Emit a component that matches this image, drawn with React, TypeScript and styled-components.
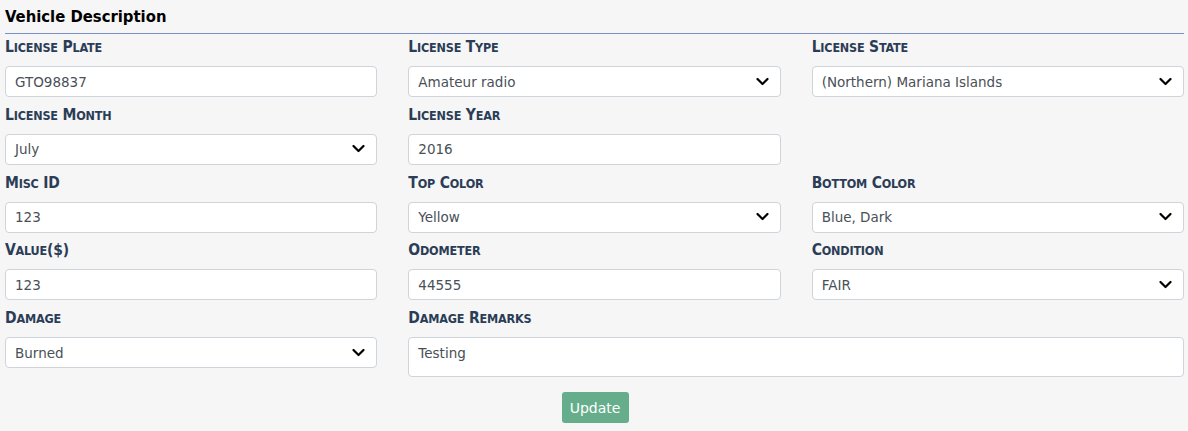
import React from "react";
import styled, { createGlobalStyle } from "styled-components";

const Global = createGlobalStyle`
  html, body { margin: 0; padding: 0; background: #f6f6f6; }
  body { font-family: "DejaVu Sans", Verdana, sans-serif; }
`;

const Page = styled.div`
  width: 1188px;
  height: 431px;
  box-sizing: border-box;
  padding: 6px 4px 0 5px;
  background: #f6f6f6;
  overflow: hidden;
`;

const Heading = styled.h2`
  margin: 0;
  font-family: "DejaVu Sans Condensed", "DejaVu Sans", sans-serif;
  font-weight: bold;
  font-size: 16.5px;
  line-height: 22px;
  color: #000;
  padding-bottom: 5px;
  border-bottom: 1px solid #7d8fc8;
`;

const Grid = styled.div`
  display: grid;
  grid-template-columns: repeat(3, 1fr);
  column-gap: 31px;
  row-gap: 7.75px;
  margin-top: 3px;
`;

const Field = styled.div<{ $span?: number }>`
  display: flex;
  flex-direction: column;
  grid-column: span ${(p) => p.$span ?? 1};
`;

const Label = styled.label`
  display: block;
  height: 20px;
  font-family: "DejaVu Sans Condensed", "DejaVu Sans", sans-serif;
  font-weight: bold;
  font-size: 15.5px;
  line-height: 20px;
  letter-spacing: -0.2px;
  color: #2b3d56;
  margin-bottom: 9px;
  white-space: nowrap;
`;

const Small = styled.span`
  font-size: 12.5px;
  line-height: 1;
  text-transform: uppercase;
`;

const Control = styled.div<{ $tall?: boolean }>`
  position: relative;
  box-sizing: border-box;
  height: ${(p) => (p.$tall ? "40px" : "31px")};
  background: #fff;
  border: 1px solid #ced4da;
  border-radius: 4px;
  padding: ${(p) => (p.$tall ? "7px 9px" : "0 9px")};
  display: flex;
  align-items: ${(p) => (p.$tall ? "flex-start" : "center")};
  font-size: 13.5px;
  color: #495057;
`;

const Chevron = styled.svg`
  position: absolute;
  right: 11px;
  top: 50%;
  transform: translateY(-50%);
`;

const Empty = styled.div``;

const Footer = styled.div`
  display: flex;
  justify-content: center;
  margin-top: 15px;
`;

const Button = styled.button`
  height: 31px;
  width: 67px;
  border: none;
  border-radius: 3px;
  background: #66ae8b;
  color: #fff;
  font-family: "DejaVu Sans", Verdana, sans-serif;
  font-size: 14px;
  padding: 0;
  margin-left: 1px;
`;

const ChevronIcon = () => (
  <Chevron width="13" height="9" viewBox="0 0 13 9">
    <path d="M1.5 1.5 L6.5 6.5 L11.5 1.5" fill="none" stroke="#000" strokeWidth="2.2" strokeLinecap="round" strokeLinejoin="round" />
  </Chevron>
);

const SmallCaps = ({ text }: { text: string }) => {
  const parts = text.match(/[a-z]+|[^a-z]+/g) ?? [];
  return (
    <>
      {parts.map((p, i) => (/[a-z]/.test(p) ? <Small key={i}>{p}</Small> : <React.Fragment key={i}>{p}</React.Fragment>))}
    </>
  );
};

type F = { label: string; value?: string; select?: boolean; empty?: boolean; tall?: boolean; span?: number };

const fields: F[] = [
  { label: "License Plate", value: "GTO98837" },
  { label: "License Type", value: "Amateur radio", select: true },
  { label: "License State", value: "(Northern) Mariana Islands", select: true },
  { label: "License Month", value: "July", select: true },
  { label: "License Year", value: "2016" },
  { label: "", empty: true },
  { label: "Misc ID", value: "123" },
  { label: "Top Color", value: "Yellow", select: true },
  { label: "Bottom Color", value: "Blue, Dark", select: true },
  { label: "Value($)", value: "123" },
  { label: "Odometer", value: "44555" },
  { label: "Condition", value: "FAIR", select: true },
  { label: "Damage", value: "Burned", select: true },
  { label: "Damage Remarks", value: "Testing", tall: true, span: 2 },
];

export default function App() {
  return (
    <Page>
      <Global />
      <Heading>Vehicle Description</Heading>
      <Grid>
        {fields.map((f, i) =>
          f.empty ? (
            <Empty key={i} />
          ) : (
            <Field key={i} $span={f.span}>
              <Label>
                <SmallCaps text={f.label} />
              </Label>
              <Control $tall={f.tall}>
                {f.value}
                {f.select && <ChevronIcon />}
              </Control>
            </Field>
          )
        )}
      </Grid>
      <Footer>
        <Button>Update</Button>
      </Footer>
    </Page>
  );
}
